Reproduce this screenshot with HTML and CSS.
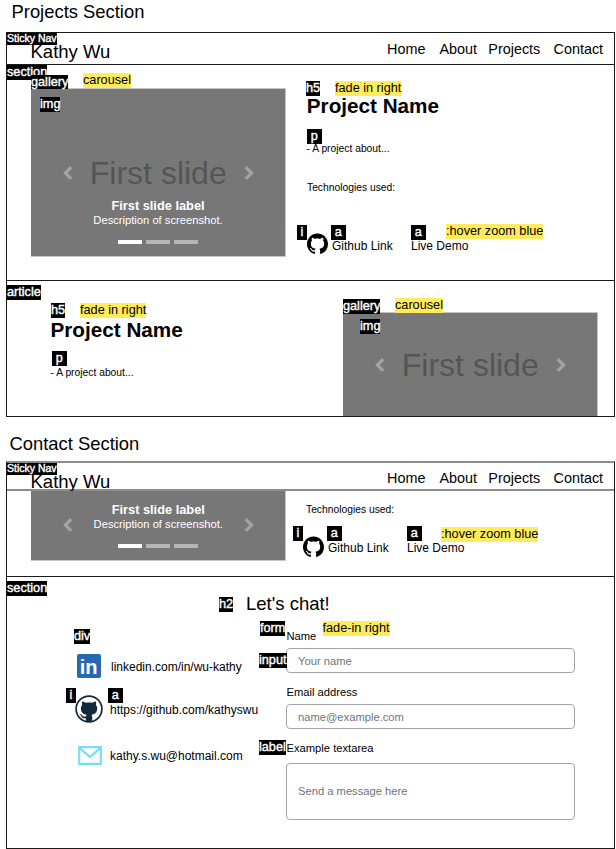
FILE: index.html
```html
<!DOCTYPE html>
<html lang="en">
<head>
<meta charset="utf-8">
<title>Kathy Wu wireframe</title>
<link rel="stylesheet" href="styles.css">
</head>
<body>
<svg class="defs" width="0" height="0" aria-hidden="true">
  <symbol id="github" viewBox="0 0 16 16"><path d="M8 0C3.58 0 0 3.58 0 8c0 3.54 2.29 6.53 5.47 7.59.4.07.55-.17.55-.38 0-.19-.01-.82-.01-1.49-2.01.37-2.53-.49-2.69-.94-.09-.23-.48-.94-.82-1.13-.28-.15-.68-.52-.01-.53.63-.01 1.08.58 1.23.82.72 1.21 1.87.87 2.33.66.07-.52.28-.87.51-1.07-1.78-.2-3.64-.89-3.64-3.95 0-.87.31-1.59.82-2.15-.08-.2-.36-1.02.08-2.12 0 0 .67-.21 2.2.82.64-.18 1.32-.27 2-.27s1.36.09 2 .27c1.53-1.04 2.2-.82 2.2-.82.44 1.1.16 1.92.08 2.12.51.56.82 1.27.82 2.15 0 3.07-1.87 3.75-3.65 3.95.29.25.54.73.54 1.48 0 1.07-.01 1.93-.01 2.2 0 .21.15.46.55.38A8.01 8.01 0 0 0 16 8c0-4.42-3.58-8-8-8z"/></symbol>
  <symbol id="prev" viewBox="0 0 10 14"><path d="M8.200 1.200 2.400 7l5.800 5.800" fill="none" stroke="#a3a3a3" stroke-width="3.200"/></symbol>
  <symbol id="next" viewBox="0 0 10 14"><path d="M1.800 1.200 7.600 7l-5.800 5.800" fill="none" stroke="#a3a3a3" stroke-width="3.200"/></symbol>
</svg>

<h1 class="title">Projects Section</h1>
<div class="frame">
  <nav class="nav">
    <span class="brand">Kathy Wu</span>
    <div class="links"><span>Home</span><span>About</span><span>Projects</span><span>Contact</span></div>
    <span class="tag tag-nav">Sticky Nav</span>
  </nav>
  <section class="project">
    <span class="tag tag-section">section</span>
    <div class="carousel">
      <div class="slide"><svg class="arrow"><use href="#prev"/></svg><span class="slide-name">First slide</span><svg class="arrow"><use href="#next"/></svg></div>
      <div class="caption"><b>First slide label</b><span>Description of screenshot.</span></div>
      <div class="dots"><i class="on"></i><i></i><i></i></div>
      <span class="tag tag-gallery">gallery</span>
      <span class="note note-carousel">carousel</span>
      <span class="tag tag-img">img</span>
    </div>
    <div class="info">
      <h5 class="name">Project Name</h5>
      <p class="about">- A project about...</p>
      <p class="tech">Technologies used:</p>
      <div class="actions">
        <svg class="mark"><use href="#github"/></svg><span class="gh">Github Link</span><span>Live Demo</span>
        <span class="tag sq tag-i">i</span><span class="tag sq tag-a">a</span><span class="tag sq tag-a2">a</span><span class="note note-hover">:hover zoom blue</span>
      </div>
      <span class="tag tag-h5">h5</span>
      <span class="note note-fade">fade in right</span>
      <span class="tag sq tag-p">p</span>
    </div>
  </section>
  <article class="project flipped">
    <span class="tag tag-section">article</span>
    <div class="info">
      <h5 class="name">Project Name</h5>
      <p class="about">- A project about...</p>
      <span class="tag tag-h5">h5</span>
      <span class="note note-fade">fade in right</span>
      <span class="tag sq tag-p">p</span>
    </div>
    <div class="carousel">
      <div class="slide"><svg class="arrow"><use href="#prev"/></svg><span class="slide-name">First slide</span><svg class="arrow"><use href="#next"/></svg></div>
      <span class="tag tag-gallery">gallery</span>
      <span class="note note-carousel">carousel</span>
      <span class="tag tag-img">img</span>
    </div>
  </article>
</div>

<h1 class="title second">Contact Section</h1>
<div class="frame scrolled">
  <nav class="nav">
    <span class="brand">Kathy Wu</span>
    <div class="links"><span>Home</span><span>About</span><span>Projects</span><span>Contact</span></div>
    <span class="tag tag-nav">Sticky Nav</span>
  </nav>
  <section class="project partial">
    <div class="carousel">
      <svg class="arrow"><use href="#prev"/></svg>
      <div class="middle">
        <div class="caption"><b>First slide label</b><span>Description of screenshot.</span></div>
        <div class="dots"><i class="on"></i><i></i><i></i></div>
      </div>
      <svg class="arrow"><use href="#next"/></svg>
    </div>
    <div class="info">
      <p class="tech">Technologies used:</p>
      <div class="actions">
        <svg class="mark"><use href="#github"/></svg><span class="gh">Github Link</span><span>Live Demo</span>
        <span class="tag sq tag-i">i</span><span class="tag sq tag-a">a</span><span class="tag sq tag-a2">a</span><span class="note note-hover">:hover zoom blue</span>
      </div>
    </div>
  </section>
  <section class="contact">
    <h2 class="chat">Let's chat!</h2>
    <div class="columns">
      <div class="people">
        <div class="person">
          <svg width="24" height="24" viewBox="0 0 24 24"><rect width="24" height="24" rx="2" fill="#2867b2"/><text class="in" x="2.800" y="19.500">in</text></svg>
          <span>linkedin.com/in/wu-kathy</span>
        </div>
        <div class="person github">
          <svg width="28" height="28" viewBox="0 0 28 28"><circle cx="14" cy="14" r="12.900" fill="#fff" stroke="#14293a" stroke-width="1.700"/><path transform="translate(1.200 1.200) scale(1.600)" fill="#14293a" d="M6.010 13.720c-2.010.37-2.530-.49-2.690-.94-.09-.23-.48-.94-.82-1.130-.28-.15-.68-.52-.01-.53.63-.01 1.080.58 1.230.82.72 1.210 1.870.87 2.330.66.07-.52.28-.87.51-1.070-1.780-.2-3.640-.89-3.640-3.950 0-.87.31-1.590.82-2.150-.08-.2-.36-1.020.08-2.120 0 0 .67-.21 2.200.82.64-.18 1.320-.27 2-.27s1.360.09 2 .27c1.530-1.040 2.200-.82 2.200-.82.44 1.100.16 1.920.08 2.120.51.56.82 1.270.82 2.150 0 3.070-1.870 3.750-3.650 3.950.29.25.54.73.54 1.480v2.500h-4z"/></svg>
          <span>https://github.com/kathyswu</span>
          <b class="tag sq tag-i">i</b><b class="tag sq tag-a">a</b>
        </div>
        <div class="person mail">
          <svg width="24" height="19" viewBox="0 0 24 19"><path d="M1.200 1.200h21.600v16.600H1.200zM1.500 1.800 12 11l10.500-9.200" fill="none" stroke="#7bdcfa" stroke-width="2.200"/></svg>
          <span>kathy.s.wu@hotmail.com</span>
        </div>
        <span class="tag tag-div">div</span>
      </div>
      <form class="form">
        <label>Name</label>
        <input placeholder="Your name">
        <label>Email address</label>
        <input placeholder="name@example.com">
        <label>Example textarea</label>
        <textarea placeholder="Send a message here"></textarea>
        <span class="tag tag-form">form</span>
        <span class="note note-form">fade-in right</span>
        <span class="tag tag-input">input</span>
        <span class="tag tag-label">label</span>
      </form>
    </div>
    <span class="tag tag-section">section</span>
    <span class="tag tag-h2">h2</span>
  </section>
</div>
</body>
</html>
```
FILE: styles.css
```css
* { box-sizing: border-box; }
body { margin: 0; background: #fff; color: #000; font: 12px/16px "Liberation Sans", Arial, sans-serif; width: 616px; height: 849px; overflow: hidden; }
h1, h2, h5, p { margin: 0; font-weight: normal; }
svg { display: block; flex: none; }
.defs { position: absolute; }

.title { font-size: 18.400px; line-height: 22px; padding: 1px 0 0 11.500px; height: 32px; }
.title.second { height: 44px; padding: 16px 0 0 9.500px; }

.frame { margin-left: 6px; width: 609px; height: 385px; border: 1px solid #1a1a1a; }
.frame.scrolled { height: 388px; border-top: 2px solid #8c8c8c; }

.nav { position: relative; display: flex; justify-content: space-between; height: 32px; padding-left: 23.500px; border-bottom: 1px solid #1a1a1a; }
.brand { margin-top: 9px; font-size: 18.500px; line-height: 20px; }
.links { display: grid; grid-template-columns: 52.500px 48.800px 65.200px 60.500px; margin-top: 8px; font-size: 14.400px; }
.scrolled .nav { height: 28px; border-bottom: 2px solid #8c8c8c; }
.scrolled .links { margin-top: 7px; }

.project { position: relative; display: flex; height: 216px; padding: 23px 0 0 24px; border-bottom: 1px solid #1a1a1a; }
.project.flipped { height: 135px; padding: 31px 0 0 43.500px; border-bottom: 0; }
.project.partial { height: 86px; padding-top: 0; }

.carousel { position: relative; width: 255px; height: 169px; background: #777; border: solid #c4c4c4; border-width: 1px 1px 1px 0; color: #fff; text-align: center; }
.slide { display: flex; justify-content: space-between; align-items: center; height: 38px; margin-top: 65px; padding: 0 31px 0 31.500px; }
.slide-name { color: #555; font-size: 32px; line-height: 36px; }
.arrow { width: 10px; height: 14px; }
.caption { display: flex; flex-direction: column; margin: 7px 0 0; font-size: 11.200px; line-height: 14px; }
.caption b { font-size: 12.800px; }
.dots { display: flex; justify-content: center; gap: 4px; margin: 13px 1px 0 0; }
.dots i { width: 24px; height: 4px; background: #b5b5b5; }
.dots .on { background: #fff; }
.flipped .carousel { width: 255px; height: 104px; border-bottom: 0; }
.flipped .slide { margin-top: 33px; }
.partial .carousel { display: flex; justify-content: space-between; height: 70px; border-top: 0; padding: 0 31px 0 31.500px; }
.partial .arrow { margin-top: 27px; }
.partial .caption { margin-top: 12px; }
.partial .dots { margin-right: 0; }

.info { position: relative; margin: 6px 0 0 20px; }
.name { margin-left: .8px; font-size: 20.700px; line-height: 24px; font-weight: bold; }
.about { margin: 24px 0 0 .5px; font-size: 10.300px; line-height: 14px; }
.tech { margin: 25px 0 0 1px; font-size: 10.300px; line-height: 14px; }
.actions { position: relative; display: flex; margin: 38px 0 0 1px; }
.actions > span:not(.tag):not(.note) { margin-top: 5px; }
.mark { width: 21px; height: 22px; }
.actions .gh { width: 79px; margin-left: 4px; }
.flipped .info { width: 292.500px; margin: 6px 0 0; }
.flipped .name { margin-left: 0; }
.flipped .about { margin-left: 0; }
.partial .info { margin: 12px 0 0 20px; }
.partial .tech { margin: 0; }
.partial .actions { margin: 19px 0 0 -3px; }
.partial .actions > span:not(.tag):not(.note) { margin-top: 4px; }

.contact { position: relative; padding-top: 16px; }
.chat { margin-left: 239px; font-size: 18.500px; line-height: 22px; }
.columns { display: flex; margin-top: 13px; padding-left: 69px; }
.people { position: relative; width: 210px; padding-top: 25px; }
.person { position: relative; display: grid; grid-template-columns: 28px auto; column-gap: 7px; align-items: center; justify-items: start; height: 26px; }
.person svg { justify-self: center; }
.person span { padding-top: 2px; }
.person.github { grid-template-columns: 27px auto; margin-top: 16px; }
.person.github svg { margin-left: -1px; }
.person.mail { grid-template-columns: 27px auto; margin-top: 21px; }
.person:first-child svg { margin-right: 2px; }
.in { fill: #fff; font: bold 20px "Liberation Sans", Arial, sans-serif; }

.form { position: relative; width: 289px; font-size: 11.200px; }
.form label { display: block; margin-bottom: 4px; padding-left: .5px; }
.form input, .form textarea { display: block; width: 289px; height: 25px; margin: 0 0 11px; padding: 0 11px; border: 1px solid #a6a6a6; border-radius: 4px; background: #fff; font: 11.200px/16px "Liberation Sans", Arial, sans-serif; outline: 0; resize: none; }
.form textarea { height: 57px; margin: 7px 0 0; padding: 19px 11px; overflow: hidden; }
.form ::placeholder { color: #6c757d; opacity: 1; }

/* annotations pinned over the wireframe */
.tag, .note { position: absolute; font-size: 12.700px; line-height: 14.500px; font-weight: normal; white-space: nowrap; }
.tag { background: #000; color: #fff; -webkit-text-stroke: .4px #fff; }
.note { background: #ffeb5c; color: #000; }
.sq { width: 14.500px; text-align: center; }
.tag-nav { left: 0; top: 0; font-size: 10.500px; line-height: 11.500px; }
.tag-section { left: 0; top: 0; }
.flipped .tag-section, .contact .tag-section { top: 4px; }
.tag-gallery { left: 0; top: -14.500px; }
.note-carousel { left: 52px; top: -16px; }
.tag-img { left: 9px; top: 8px; }
.flipped .tag-gallery { top: -14px; }
.flipped .note-carousel { top: -15px; }
.flipped .tag-img { left: 17px; top: 6px; }
.tag-h5 { left: 0; top: -13px; }
.note-fade { left: 29px; top: -13px; }
.tag-p { left: 1px; top: 35px; }
.flipped .tag-h5 { left: .5px; top: -15px; }
.flipped .note-fade { left: 29.500px; top: -15px; }
.flipped .tag-p { left: 1.500px; top: 33px; }
.tag-i { left: -10px; top: -8px; width: 10px; }
.actions .tag-a { left: 24px; top: -8px; }
.tag-a2 { left: 104px; top: -8px; }
.note-hover { left: 139px; top: -9px; }
.partial .tag { top: -10px; }
.partial .note-hover { left: 138px; }
.person .tag-i { top: -7px; }
.person .tag-a { left: 32px; top: -7px; }
.tag-div { left: -2px; top: 1px; }
.tag-h2 { left: 212px; top: 20px; }
.tag-form { left: -26px; top: -7px; }
.note-form { left: 36.500px; top: -7px; }
.tag-input { left: -27px; top: 25px; }
.tag-label { left: -27px; top: 112px; }
```
